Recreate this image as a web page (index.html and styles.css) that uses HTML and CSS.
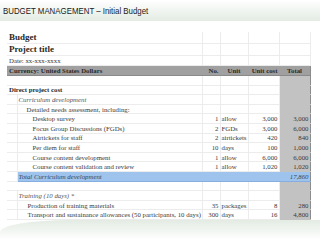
FILE: index.html
```html
<!DOCTYPE html>
<html lang="en">
<head>
    <meta charset="UTF-8">
    <title>Budget Management</title>
    <link rel="stylesheet" href="styles.css">
</head>
<body>

    <div class="topbar">
        <span class="slide-title">BUDGET MANAGEMENT – Initial Budget</span>
    </div>

    <div class="sheet">
        <table class="budget">
            <colgroup>
                <col class="c-a"><col class="c-desc"><col class="c-no"><col class="c-unit"><col class="c-cost"><col class="c-total">
            </colgroup>
            <tr class="r-big"><td colspan="2" class="strong">Budget</td><td></td><td></td><td></td><td></td></tr>
            <tr class="r-big"><td colspan="2" class="strong">Project title</td><td></td><td></td><td></td><td></td></tr>
            <tr class="r-date"><td colspan="2">Date: xx-xxx-xxxx</td><td></td><td></td><td></td><td></td></tr>
            <tr class="r-head">
                <td colspan="2" class="strong">Currency: United States Dollars</td>
                <td class="num">No.</td><td class="mid">Unit</td><td class="num">Unit cost</td><td class="total mid">Total</td>
            </tr>
            <tr><td colspan="2"></td><td></td><td></td><td></td><td class="total"></td></tr>
            <tr><td colspan="2" class="strong">Direct project cost</td><td></td><td></td><td></td><td class="total"></td></tr>
            <tr><td></td><td class="sub">Curriculum development</td><td></td><td></td><td></td><td class="total"></td></tr>
            <tr><td></td><td class="lvl2">Detailed needs assessment, including:</td><td></td><td></td><td></td><td class="total"></td></tr>
            <tr><td></td><td class="lvl3">Desktop survey</td><td class="num">1</td><td>allow</td><td class="num">3,000</td><td class="total num">3,000</td></tr>
            <tr><td></td><td class="lvl3">Focus Group Discussions (FGDs)</td><td class="num">2</td><td>FGDs</td><td class="num">3,000</td><td class="total num">6,000</td></tr>
            <tr><td></td><td class="lvl3">Airtickets for staff</td><td class="num">2</td><td>airtickets</td><td class="num">420</td><td class="total num">840</td></tr>
            <tr><td></td><td class="lvl3">Per diem for staff</td><td class="num">10</td><td>days</td><td class="num">100</td><td class="total num">1,000</td></tr>
            <tr><td></td><td class="lvl3">Course content development</td><td class="num">1</td><td>allow</td><td class="num">6,000</td><td class="total num">6,000</td></tr>
            <tr><td></td><td class="lvl3">Course content validation and review</td><td class="num">1</td><td>allow</td><td class="num">1,020</td><td class="total num">1,020</td></tr>
            <tr class="r-subtotal"><td></td><td class="sub">Total Curriculum development</td><td></td><td></td><td></td><td class="total num sub">17,860</td></tr>
            <tr><td colspan="2"></td><td></td><td></td><td></td><td class="total"></td></tr>
            <tr><td></td><td class="sub">Training (10 days) *</td><td></td><td></td><td></td><td class="total"></td></tr>
            <tr><td></td><td class="lvl2b">Production of training materials</td><td class="num">35</td><td>packages</td><td class="num">8</td><td class="total num">280</td></tr>
            <tr><td></td><td class="lvl2b">Transport and sustainance allowances (50 participants, 10 days)</td><td class="num">300</td><td>days</td><td class="num">16</td><td class="total num">4,800</td></tr>
        </table>
    </div>

    <div class="swoosh"></div>

</body>
</html>
```

FILE: styles.css
```css
body {
    margin: 0;
    width: 320px;
    height: 240px;
    overflow: hidden;
    background: #fff;
    font-family: 'Liberation Serif', serif;
    color: #3a3a3a;
}

.topbar {
    height: 21px;
    display: flex;
    align-items: center;
    padding-left: 3px;
    background: linear-gradient(#ffffff, #e3ebe3);
}

.slide-title {
    font-family: 'Liberation Sans', sans-serif;
    font-size: 9.6px;
    color: #1a1a1a;
    transform: scaleX(0.82);
    transform-origin: left center;
    white-space: nowrap;
}

.sheet {
    padding: 11px 0 0 7px;
    height: 188px;
    overflow: hidden;
}

.budget {
    border-collapse: collapse;
    table-layout: fixed;
    width: 303px;
    font-size: 6.8px;
}

.c-a { width: 10px; }
.c-desc { width: 185px; }
.c-no { width: 18px; }
.c-unit { width: 28px; }
.c-cost { width: 31px; }
.c-total { width: 31px; }

.budget td {
    height: 8.6px;
    padding: 0 1px;
    line-height: 7px;
    white-space: nowrap;
    overflow: hidden;
    border-bottom: 1px solid #ececec;
    border-right: 1px solid #ececec;
}

.budget td:first-child {
    padding-left: 2px;
}

.r-big td {
    height: 11px;
    font-size: 9px;
}

.r-date td {
    height: 9px;
}

.strong {
    font-weight: bold;
    color: #2a2a2a;
}

.r-head td {
    height: 9px;
    background: #a0a0a0;
    font-weight: bold;
    color: #2a2a2a;
    border-right-color: #a0a0a0;
    border-bottom-color: #8a8a8a;
}

.num { text-align: right; }
.mid { text-align: center; }

.sub {
    font-style: italic;
    color: #555;
}

.budget td.lvl2 { padding-left: 9px; }
.budget td.lvl3 { padding-left: 15px; }
.budget td.lvl2b { padding-left: 10px; }

.budget td.total {
    background: #c2c2c2;
    border-left: 1px solid #8c8c8c;
    border-right: 1px solid #8c8c8c;
    border-bottom-color: #c2c2c2;
}

.r-head td.total {
    background: #a0a0a0;
    border-bottom-color: #8a8a8a;
}

.r-subtotal td {
    background: #9ec4ee;
    border-right-color: #9ec4ee;
    border-bottom-color: #86aee0;
    color: #34485e;
}

.r-subtotal td:first-child {
    background: #fff;
    border-right-color: #ececec;
    border-bottom-color: #ececec;
}

.budget .r-subtotal td.total {
    background: #9ec4ee;
    border-bottom-color: #86aee0;
}

.swoosh {
    height: 20px;
    background: linear-gradient(#e3ebe3, #ffffff);
    border-top-left-radius: 70px 12px;
}
```
